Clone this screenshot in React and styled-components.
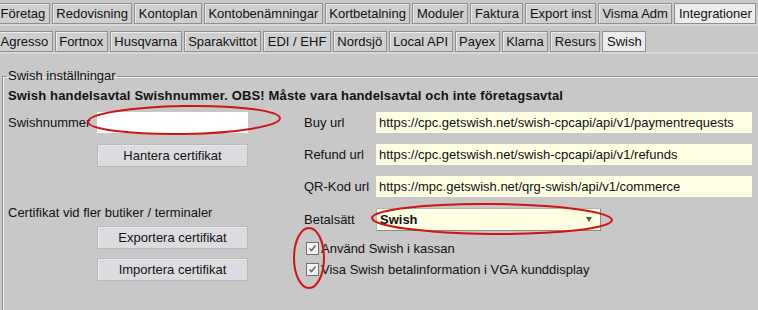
import React from "react";
import styled, { createGlobalStyle } from "styled-components";

const GlobalStyle = createGlobalStyle`
  html, body {
    margin: 0;
    padding: 0;
    background: #c8c8c8;
  }
  body {
    font-family: "Liberation Sans", Arial, sans-serif;
    font-size: 13px;
    color: #111;
  }
`;

const Page = styled.div`
  position: relative;
  width: 758px;
  height: 310px;
  overflow: hidden;
  background: #c8c8c8;
`;

const TabRow = styled.div`
  display: flex;
  gap: 2px;
  margin-left: -4px;
  padding-top: ${(p) => p.top}px;
  height: 21px;
  border-bottom: 2px solid #d8d8d8;
`;

const Tab = styled.div`
  height: 19px;
  line-height: 19px;
  padding: 0 3.5px;
  white-space: nowrap;
  border: 1px solid #8e8e8e;
  box-shadow: inset 1px 1px 0 #ececec;
  background: ${(p) => (p.active ? "#ececec" : "#cfcfcf")};
`;

const GroupBox = styled.fieldset`
  margin: 15px 0 0 2px;
  padding: 4px 0 0 5px;
  height: 300px;
  border: none;
  border-top: 1px solid #8e8e8e;
  border-left: 1px solid #8e8e8e;
  box-shadow: inset 1px 1px 0 #f4f4f4;
  min-width: 0;

  legend {
    padding: 0 1px;
    margin-left: -1px;
    line-height: 14px;
  }
`;

const Heading = styled.div`
  font-weight: bold;
  line-height: 16px;
  letter-spacing: 0.15px;
  margin-top: 1px;
`;

const Columns = styled.div`
  display: grid;
  grid-template-columns: 296px 1fr;
  margin-top: 8px;
`;

const Column = styled.div`
  display: flex;
  flex-direction: column;
`;

const FieldRow = styled.div`
  display: flex;
  align-items: center;
  height: ${(p) => p.h || 21}px;
  margin-bottom: ${(p) => p.mb || 0}px;
`;

const Label = styled.div`
  width: ${(p) => p.w}px;
  flex: none;
  white-space: nowrap;
  overflow: visible;
`;

const TextBox = styled.div`
  width: ${(p) => p.w}px;
  height: 21px;
  line-height: 21px;
  padding-left: 3px;
  box-sizing: border-box;
  background: ${(p) => (p.yellow ? "#ffffe4" : "#ffffff")};
  white-space: nowrap;
  overflow: hidden;
`;

const Button = styled.div`
  width: 151px;
  height: 23px;
  margin-left: 89px;
  margin-top: ${(p) => p.mt || 0}px;
  box-sizing: border-box;
  line-height: 21px;
  text-align: center;
  background: #dcdce0;
  border: 1px solid #b9b9bd;
  box-shadow: inset 1px 1px 0 #e8e8ec;
`;

const Note = styled.div`
  line-height: 16px;
  margin-top: 38px;
`;

const Select = styled.div`
  position: relative;
  width: 225px;
  height: 23px;
  box-sizing: border-box;
  line-height: 21px;
  padding-left: 3px;
  font-weight: bold;
  background: #ffffe4;
  border: 1px solid #b4b4b4;
  border-right-color: #8c8c8c;
  border-bottom-color: #8c8c8c;

  &::after {
    content: "";
    position: absolute;
    right: 8px;
    top: 8px;
    border-left: 3px solid transparent;
    border-right: 3px solid transparent;
    border-top: 5px solid #555;
  }
`;

const Checks = styled.div`
  display: flex;
  flex-direction: column;
  gap: 1px;
  margin-top: 7px;
`;

const CheckRow = styled.label`
  display: flex;
  align-items: center;
  height: 20px;
  margin-left: 2px;
  gap: 2px;
`;

const Box = styled.span`
  width: 11px;
  height: 11px;
  border: 1px solid #707070;
  background: #f4f4f4;
  display: flex;
  align-items: center;
  justify-content: center;
`;

const Marks = styled.svg`
  position: absolute;
  left: 0;
  top: 0;
  pointer-events: none;
`;

const row1 = [
  "Företag",
  "Redovisning",
  "Kontoplan",
  "Kontobenämningar",
  "Kortbetalning",
  "Moduler",
  "Faktura",
  "Export inst",
  "Visma Adm",
  "Integrationer",
];

const row2 = [
  "Agresso",
  "Fortnox",
  "Husqvarna",
  "Sparakvittot",
  "EDI / EHF",
  "Nordsjö",
  "Local API",
  "Payex",
  "Klarna",
  "Resurs",
  "Swish",
];

const urls = [
  ["Buy url", "https://cpc.getswish.net/swish-cpcapi/api/v1/paymentrequests"],
  ["Refund url", "https://cpc.getswish.net/swish-cpcapi/api/v1/refunds"],
  ["QR-Kod url", "https://mpc.getswish.net/qrg-swish/api/v1/commerce"],
];

function Check({ children }) {
  return (
    <CheckRow>
      <Box>
        <svg width="9" height="9" viewBox="0 0 9 9">
          <path d="M1.5 4.5 L3.5 6.5 L7.5 1.5" fill="none" stroke="#6a6a6a" strokeWidth="1.6" />
        </svg>
      </Box>
      {children}
    </CheckRow>
  );
}

export default function App() {
  return (
    <Page>
      <GlobalStyle />
      <TabRow top={3}>
        {row1.map((t) => (
          <Tab key={t} active={t === "Integrationer"}>
            {t}
          </Tab>
        ))}
      </TabRow>
      <TabRow top={5}>
        {row2.map((t) => (
          <Tab key={t} active={t === "Swish"}>
            {t}
          </Tab>
        ))}
      </TabRow>

      <GroupBox>
        <legend>Swish inställningar</legend>
        <Heading>
          Swish handelsavtal Swishnummer. OBS! Måste vara handelsavtal och inte
          företagsavtal
        </Heading>
        <Columns>
          <Column>
            <FieldRow mb={11}>
              <Label w={89}>Swishnummer</Label>
              <TextBox w={151} />
            </FieldRow>
            <Button>Hantera certifikat</Button>
            <Note>Certifikat vid fler butiker / terminaler</Note>
            <Button mt={5}>Exportera certifikat</Button>
            <Button mt={9}>Importera certifikat</Button>
          </Column>
          <Column>
            {urls.map(([l, u]) => (
              <FieldRow key={l} mb={11}>
                <Label w={72}>{l}</Label>
                <TextBox w={376} yellow>
                  {u}
                </TextBox>
              </FieldRow>
            ))}
            <FieldRow h={23}>
              <Label w={72}>Betalsätt</Label>
              <Select>Swish</Select>
            </FieldRow>
            <Checks>
              <Check>Använd Swish i kassan</Check>
              <Check>Visa Swish betalinformation i VGA kunddisplay</Check>
            </Checks>
          </Column>
        </Columns>
      </GroupBox>

      <Marks width="758" height="310">
        <g fill="none" stroke="#d11414" strokeWidth="2">
          <ellipse cx="184" cy="120" rx="96" ry="14" transform="rotate(-1 184 120)" />
          <ellipse cx="492" cy="219" rx="120" ry="15" transform="rotate(0.5 492 219)" />
          <ellipse cx="309" cy="258" rx="15" ry="30" />
        </g>
      </Marks>
    </Page>
  );
}
